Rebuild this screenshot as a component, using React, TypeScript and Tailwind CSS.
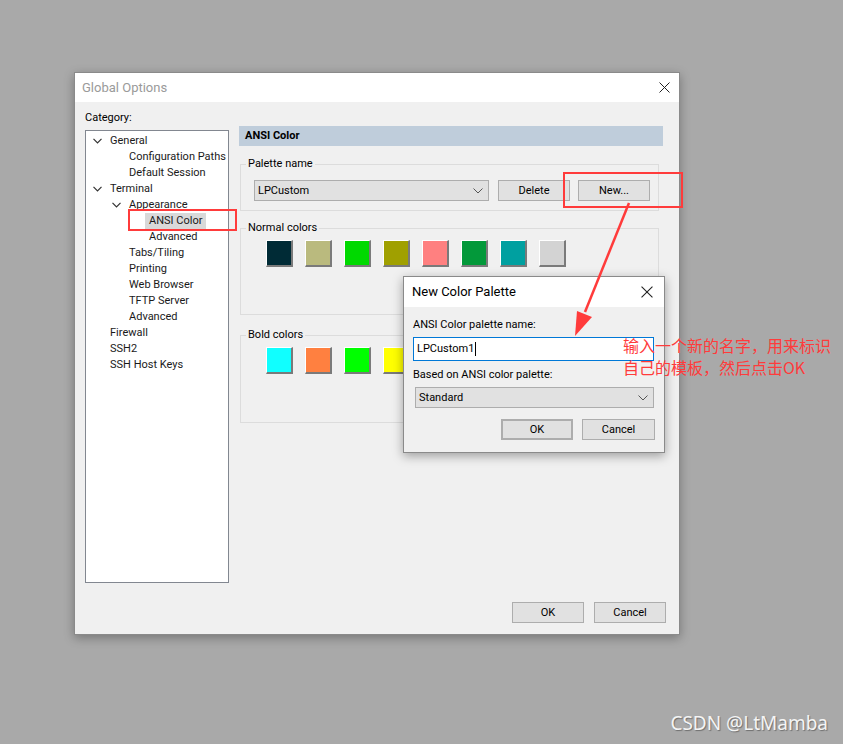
import React from 'react';

const ui = "font-['Roboto','Noto_Sans_CJK_SC',sans-serif]";

const Chevron = () => (
  <svg width="9" height="6" viewBox="0 0 9 6" className="shrink-0">
    <polyline points="0.5,0.8 4.5,4.8 8.5,0.8" fill="none" stroke="#333" strokeWidth="1.2" />
  </svg>
);

const CloseX = ({ size = 11 }: { size?: number }) => (
  <svg width={size} height={size} viewBox="0 0 11 11">
    <path d="M0.5 0.5 L10.5 10.5 M10.5 0.5 L0.5 10.5" stroke="#222" strokeWidth="1" />
  </svg>
);

const DropArrow = () => (
  <svg width="10" height="6" viewBox="0 0 10 6">
    <polyline points="0.5,0.5 5,5 9.5,0.5" fill="none" stroke="#555" strokeWidth="1" />
  </svg>
);

type Node = { label: string; level: number; open?: boolean; selected?: boolean };

const tree: Node[] = [
  { label: 'General', level: 0, open: true },
  { label: 'Configuration Paths', level: 1 },
  { label: 'Default Session', level: 1 },
  { label: 'Terminal', level: 0, open: true },
  { label: 'Appearance', level: 1, open: true },
  { label: 'ANSI Color', level: 2, selected: true },
  { label: 'Advanced', level: 2 },
  { label: 'Tabs/Tiling', level: 1 },
  { label: 'Printing', level: 1 },
  { label: 'Web Browser', level: 1 },
  { label: 'TFTP Server', level: 1 },
  { label: 'Advanced', level: 1 },
  { label: 'Firewall', level: 0 },
  { label: 'SSH2', level: 0 },
  { label: 'SSH Host Keys', level: 0 },
];

const indent = ['pl-[24px]', 'pl-[43px]', 'pl-[63px]'];
const chevronPos = ['left-[7px]', 'left-[26px]', 'left-[45px]'];

const normalColors = ['#002b36', '#baba7e', '#00d900', '#a0a000', '#ff8080', '#03993a', '#00a0a0', '#d3d3d3'];
const boldColors = ['#10ffff', '#ff8040', '#00ff00', '#ffff00', '#8080ff', '#ff40ff', '#40ffff', '#ffffff'];

const Swatch = ({ color }: { color: string }) => (
  <div
    className="w-[27px] h-[27px] border-t border-l border-b-2 border-r-2 border-t-white border-l-white border-b-[#7a7a7a] border-r-[#7a7a7a]"
    style={{ backgroundColor: color }}
  />
);

const Btn = ({ children, className = '' }: { children: React.ReactNode; className?: string }) => (
  <div className={`h-[21px] w-[72px] bg-[#e1e1e1] border border-[#adadad] flex items-center justify-center text-[11px] leading-[14px] text-black ${className}`}>
    {children}
  </div>
);

const App = () => {
  return (
    <div className={`relative w-[843px] h-[744px] overflow-hidden bg-[#a9a9a9] pt-[72px] pl-[74px] ${ui}`}>
      {/* main window */}
      <div className="w-[606px] h-[563px] bg-[#f0f0f0] border border-[#8a8a8a] shadow-[0_3px_10px_rgba(0,0,0,0.3)] flex flex-col">
        <div className="h-[29px] bg-white flex items-center justify-between pl-[7px] pr-[9px]">
          <span className="text-[13px] leading-[16px] text-[#9a9a9a]">Global Options</span>
          <CloseX />
        </div>

        <div className="flex">
          {/* category */}
          <div className="pl-[10px] pt-[9px]">
            <div className="text-[11px] leading-[14px] text-black">Category:</div>
            <div className="mt-[5px] w-[144px] h-[453px] bg-white border border-[#828790] pt-[2px]">
              {tree.map((n, i) => (
                <div key={i} className={`relative h-[16px] flex items-center whitespace-nowrap ${indent[n.level]}`}>
                  {n.open && (
                    <span className={`absolute top-[5px] ${chevronPos[n.level]}`}>
                      <Chevron />
                    </span>
                  )}
                  <span
                    className={`text-[11px] leading-[16px] text-[#1a1a1a] ${n.selected ? 'bg-[#d9d9d9] -ml-[4px] pl-[4px] pr-[4px]' : ''}`}
                  >
                    {n.label}
                  </span>
                </div>
              ))}
            </div>
          </div>

          {/* right panel */}
          <div className="ml-[10px] pt-[24px] w-[424px]">
            <div className="h-[20px] bg-[#bfcddb] pl-[6px] flex items-center text-[11px] leading-[14px] font-bold text-black">
              ANSI Color
            </div>

            <fieldset className="mt-[11px] ml-[1px] w-[419px] border border-[#dcdcdc] pb-[9px]">
              <legend className="ml-[5px] px-[2px] text-[11px] leading-[14px] text-black">Palette name</legend>
              <div className="pl-[13px] pt-[9px] flex items-center">
                <div className="w-[235px] h-[21px] bg-[#e1e1e1] border border-[#adadad] flex items-center justify-between pl-[3px] pr-[5px] text-[11px] leading-[14px]">
                  <span>LPCustom</span>
                  <DropArrow />
                </div>
                <Btn className="ml-[9px]">Delete</Btn>
                <Btn className="ml-[8px]">New...</Btn>
              </div>
            </fieldset>

            <fieldset className="mt-[10px] ml-[1px] w-[419px] h-[94px] border border-[#dcdcdc]">
              <legend className="ml-[5px] px-[2px] text-[11px] leading-[14px] text-black">Normal colors</legend>
              <div className="pl-[25px] pt-[5px] flex gap-[12px]">
                {normalColors.map((c, i) => (
                  <Swatch key={i} color={c} />
                ))}
              </div>
            </fieldset>

            <fieldset className="mt-[13px] ml-[1px] w-[419px] h-[95px] border border-[#dcdcdc]">
              <legend className="ml-[5px] px-[2px] text-[11px] leading-[14px] text-black">Bold colors</legend>
              <div className="pl-[25px] pt-[5px] flex gap-[12px]">
                {boldColors.map((c, i) => (
                  <Swatch key={i} color={c} />
                ))}
              </div>
            </fieldset>
          </div>
        </div>

        <div className="mt-[19px] flex justify-end gap-[10px] pr-[13px]">
          <Btn>OK</Btn>
          <Btn>Cancel</Btn>
        </div>
      </div>

      {/* New Color Palette dialog */}
      <div className="absolute left-[403px] top-[276px] w-[262px] h-[177px] bg-[#f0f0f0] border border-[#8a8a8a] shadow-[0_3px_10px_rgba(0,0,0,0.35)] flex flex-col">
        <div className="h-[30px] bg-white flex items-center justify-between pl-[8px] pr-[11px]">
          <span className="text-[13px] leading-[16px] text-black">New Color Palette</span>
          <CloseX size={12} />
        </div>
        <div className="pl-[9px] pt-[11px]">
          <div className="text-[11px] leading-[14px] text-black">ANSI Color palette name:</div>
          <div className="mt-[5px] w-[241px] h-[24px] bg-white border border-[#0078d7] flex items-center pl-[3px] text-[11px] leading-[14px] text-black">
            LPCustom1<span className="inline-block w-px h-[14px] bg-black ml-[1px]" />
          </div>
          <div className="mt-[7px] text-[11px] leading-[14px] text-black">Based on ANSI color palette:</div>
          <div className="mt-[5px] ml-[2px] w-[239px] h-[21px] bg-[#e1e1e1] border border-[#adadad] flex items-center justify-between pl-[3px] pr-[5px] text-[11px] leading-[14px]">
            <span>Standard</span>
            <DropArrow />
          </div>
          <div className="mt-[11px] flex justify-end gap-[9px] pr-[9px]">
            <Btn className="border-2 border-[#0078d7]">OK</Btn>
            <Btn className="w-[73px]">Cancel</Btn>
          </div>
        </div>
      </div>

      {/* annotations */}
      <div className="absolute left-[128px] top-[209px] w-[109px] h-[22px] border-2 border-[#ff3b3b]" />
      <div className="absolute left-[563px] top-[172px] w-[120px] h-[36px] border-2 border-[#ff3b3b]" />
      <svg className="absolute left-0 top-0 pointer-events-none" width="843" height="744">
        <line x1="629" y1="203" x2="585" y2="312" stroke="#ff3b3b" strokeWidth="2.5" />
        <polygon points="575,336 592,317 577,311" fill="#ff3b3b" />
      </svg>
      <div className="absolute left-[623px] top-[334px] text-[16px] leading-[22px] text-[#ff3b3b] font-['Noto_Sans_CJK_SC',sans-serif]">
        <div>输入一个新的名字，用来标识</div>
        <div>自己的模板，然后点击OK</div>
      </div>

      <div className="absolute right-[15px] top-[711px] text-[19px] leading-[24px] text-[#f4f4f4] font-['Noto_Sans',sans-serif] [text-shadow:1px_1px_1px_rgba(0,0,0,0.35)]">
        CSDN @LtMamba
      </div>
    </div>
  );
};

export default App;
